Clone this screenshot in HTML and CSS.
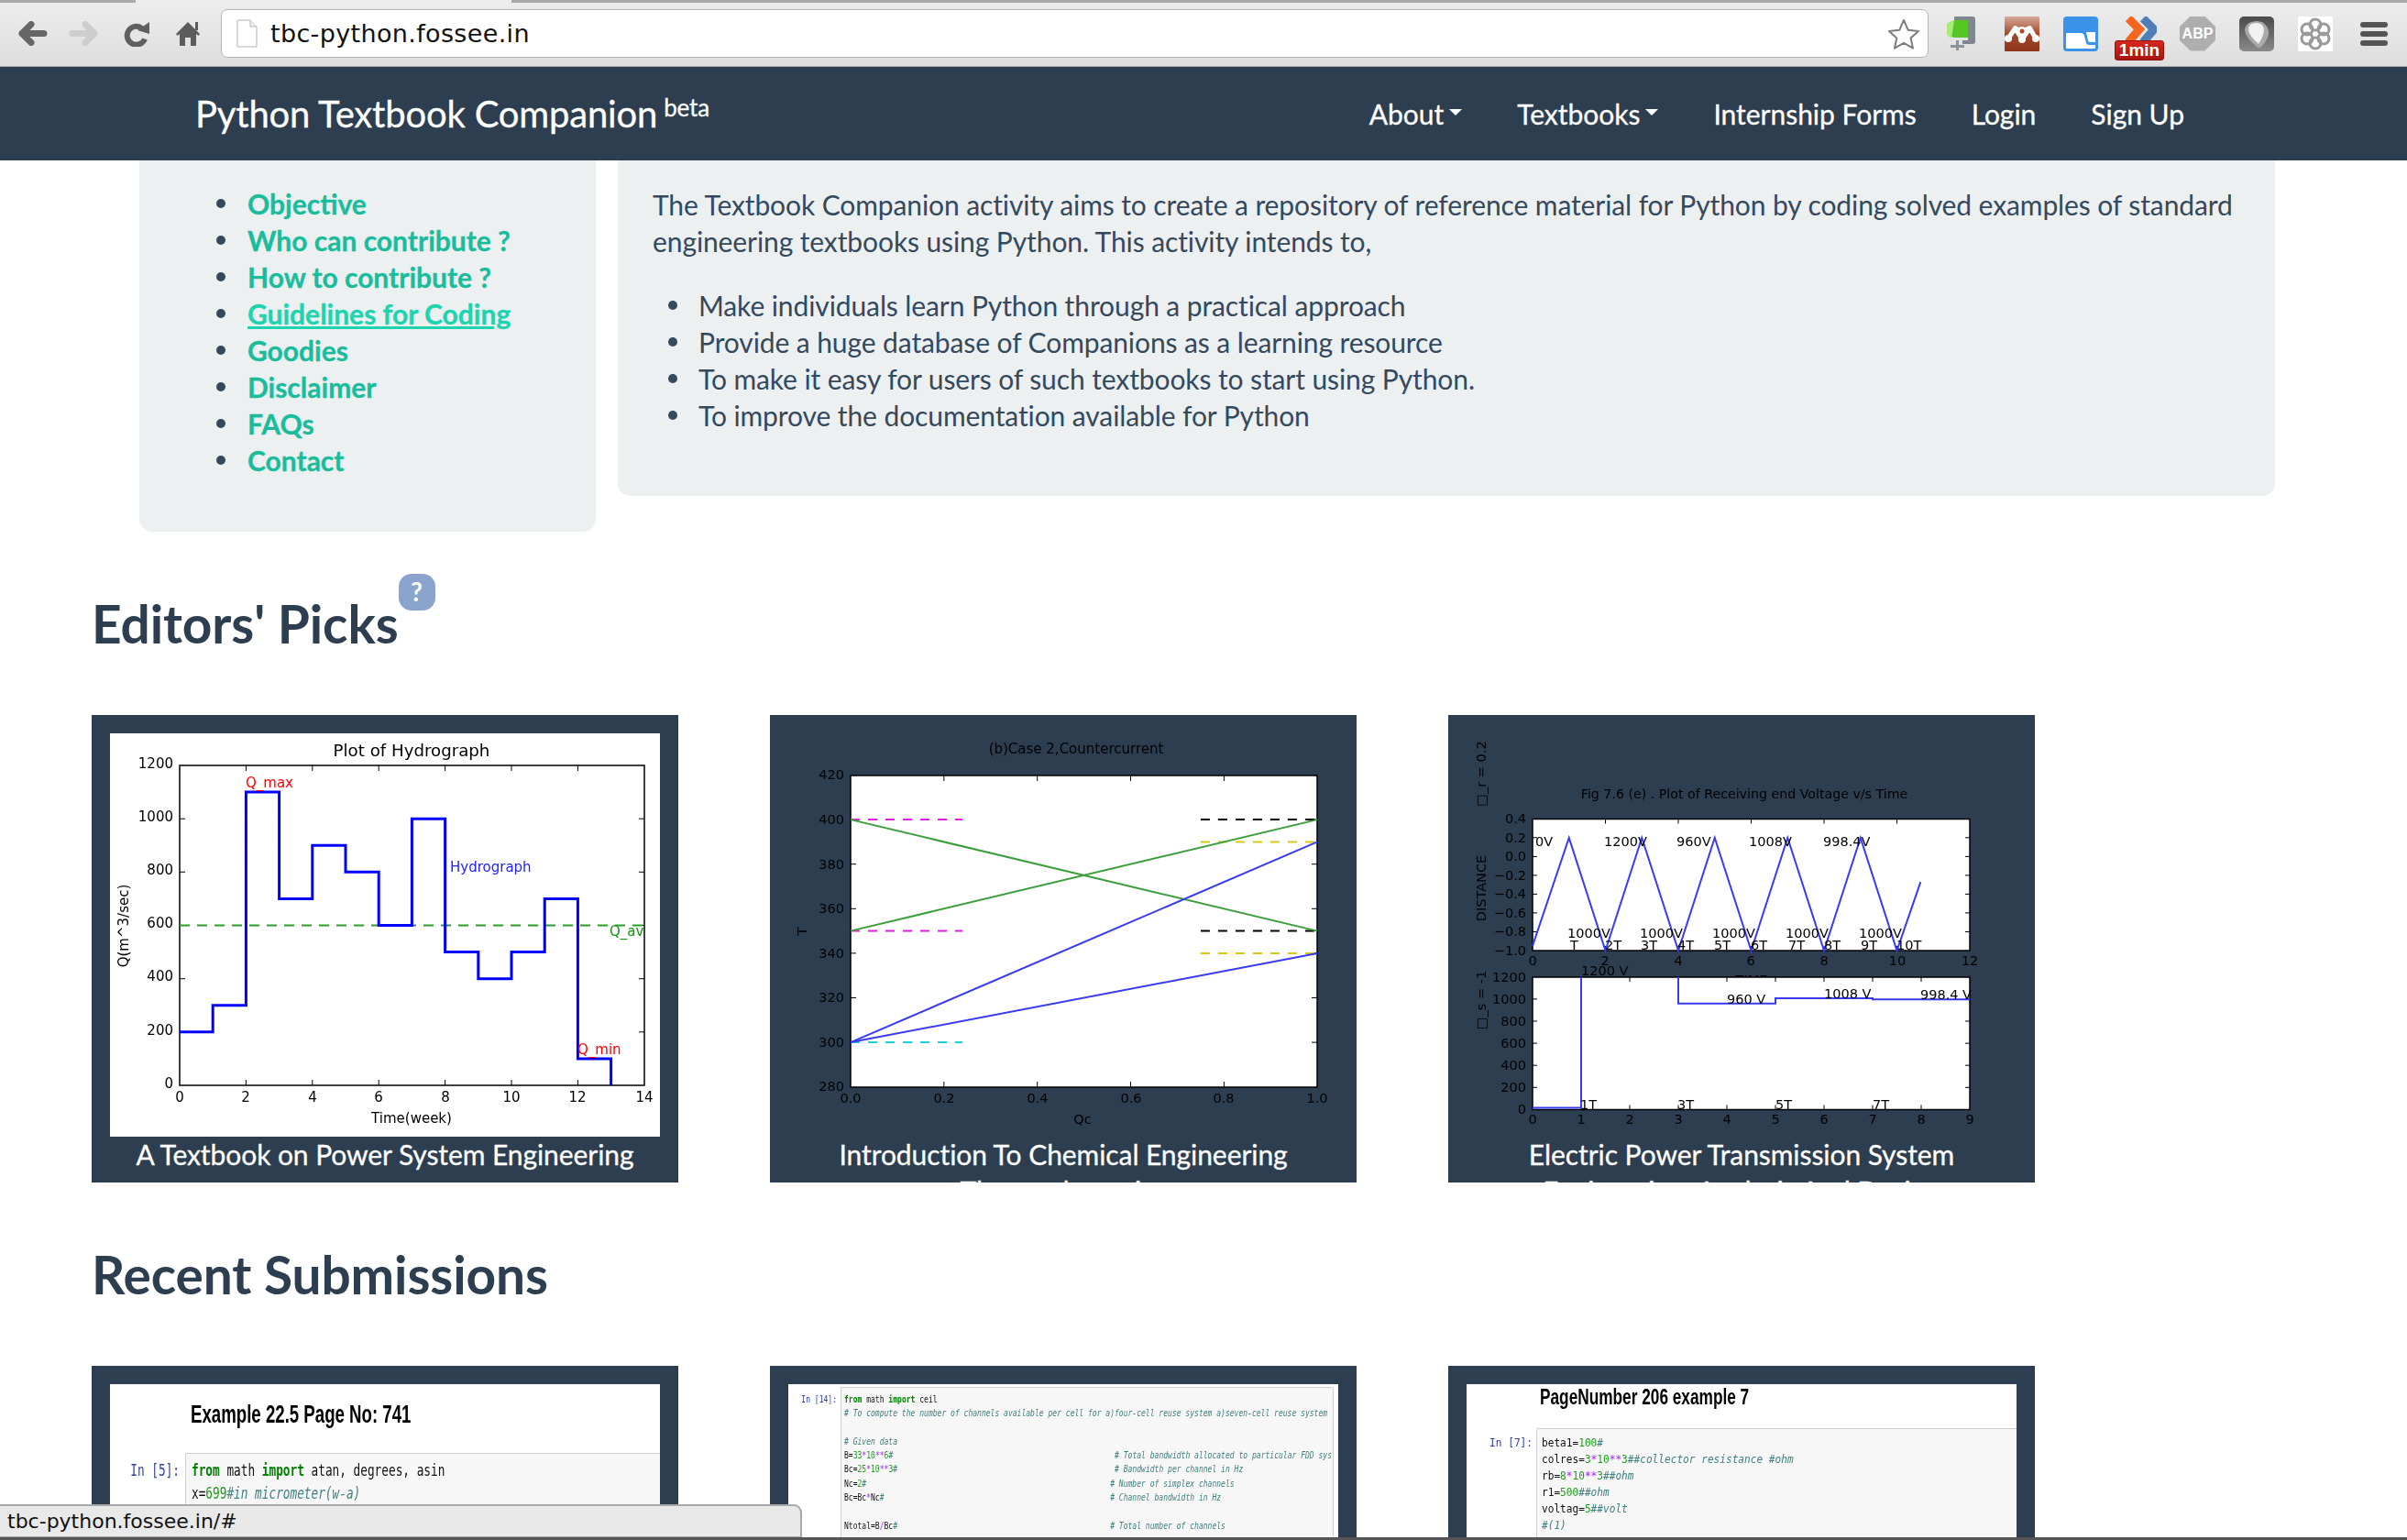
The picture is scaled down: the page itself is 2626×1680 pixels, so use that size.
FILE: index.html
```html
<!DOCTYPE html>
<html lang="en">
<head>
<meta charset="utf-8">
<title>Python Textbook Companion</title>
<link rel="stylesheet" href="styles.css">
</head>
<body>
<header class="browser">
  <div class="tabstrip"><span class="tab-edge tab-left"></span><span class="tab-active"></span><span class="tab-edge tab-right"></span></div>
  <div class="toolbar">
    <svg class="ico ico-back" width="32" height="27" viewBox="0 0 32 27"><path d="M4 13.500H28M14 3.500 4 13.500l10 10" fill="none" stroke="#666" stroke-width="7" stroke-linecap="round" stroke-linejoin="round"/></svg>
    <svg class="ico ico-fwd" width="32" height="27" viewBox="0 0 32 27"><path d="M28 13.500H4M18 3.500l10 10-10 10" fill="none" stroke="#cdcdcd" stroke-width="7" stroke-linecap="round" stroke-linejoin="round"/></svg>
    <svg class="ico ico-reload" width="30" height="28" viewBox="0 0 30 28"><path d="M21 8A10 10 0 1 0 24 19.500" fill="none" stroke="#5f5f5f" stroke-width="6"/><path d="M16 10 29 1v13z" fill="#5f5f5f"/></svg>
    <svg class="ico ico-home" width="28" height="28" viewBox="0 0 28 28"><path d="M14 1 27 14l-1.500 2-2.500-2v13h-6v-9h-6v9H5V14l-2.500 2L1 14z" fill="#5c5c5c"/><path d="M22 1h3v9h-3z" fill="#5c5c5c"/></svg>
    <div class="omnibox">
      <svg class="ico ico-page" width="23" height="31" viewBox="0 0 23 31"><path d="M1 1h14l7 7v22H1z" fill="#fff" stroke="#b5b5b5"/><path d="M15 1v7h7" fill="#eee" stroke="#b5b5b5"/></svg>
      <span class="url">tbc-python.fossee.in</span>
      <svg class="ico ico-star" width="36" height="34" viewBox="0 0 36 34"><path d="M18 2l4.800 10.800 11.200 1.200-8.400 7.500 2.400 11.200L18 26.800 7.900 32.700l2.400-11.200L2 14l11.200-1.200z" fill="#fff" stroke="#7d7d7d" stroke-width="2" stroke-linejoin="round"/></svg>
    </div>
    <div class="extensions">
      <svg class="ext ext-clamp" width="31" height="38" viewBox="0 0 31 38"><path d="M8 0h20q3 0 3 3v24q0 3-3 3H17v-4h6V5H8z" fill="#7f8790"/><path d="M0 8 8 4h15v19H8l-8-3z" fill="#57c523"/><path d="M0 8l8-4-3 20-5-4z" fill="#a9ea7a"/><path d="M10 26h3v11h-3zM4 31h15v3H4z" fill="#8d959c"/></svg>
      <svg class="ext ext-mend" width="38" height="38" viewBox="0 0 38 38"><defs><linearGradient id="md" x1="0" y1="0" x2="0" y2="1"><stop offset="0" stop-color="#d6ab9a"/><stop offset=".5" stop-color="#a5482c"/><stop offset="1" stop-color="#8c351b"/></linearGradient></defs><rect width="38" height="38" rx="1" fill="url(#md)"/><path d="M4 24 11.500 12.700 19 25l8.500-12.300L34 24M11.500 12.700 19 16l8.500-3.300" fill="none" stroke="#fff" stroke-width="5" stroke-linejoin="round" stroke-linecap="round"/><circle cx="4" cy="24" r="4" fill="#fff"/><circle cx="34" cy="24" r="4" fill="#fff"/><circle cx="19" cy="25" r="4" fill="#fff"/><circle cx="19" cy="16" r="5" fill="#fff"/><circle cx="19" cy="16" r="2.500" fill="#b5492c"/></svg>
      <svg class="ext ext-blue" width="38" height="38" viewBox="0 0 38 38"><rect width="38" height="38" rx="4" fill="#3a93e8"/><path d="M3 18h16q3 0 4 3l2 8q1 2 3 2h7v3q0 1-1 1H4q-1 0-1-1z" fill="#fff"/><path d="M25 17h10v11h-6q-2 0-2-2z" fill="#fff"/></svg>
      <div class="ext-wrap">
        <svg class="ext-chev" width="36" height="30" viewBox="0 0 36 30"><path d="M21 2l12 12-12 14" fill="none" stroke="#4f7db5" stroke-width="9"/><path d="M5 2l12 12L5 28" fill="none" stroke="#f4661b" stroke-width="9"/></svg>
        <span class="badge-min">1min</span>
      </div>
      <div class="ext-abp">ABP</div>
      <svg class="ext ext-pick" width="38" height="38" viewBox="0 0 38 38"><defs><linearGradient id="pk" x1="0" y1="0" x2="0" y2="1"><stop offset="0" stop-color="#4a4a4a"/><stop offset="1" stop-color="#8a8a8a"/></linearGradient></defs><rect width="38" height="38" rx="5" fill="url(#pk)"/><path d="M20 5q10 1 12 11 1 8-8 17-3 2-5 0Q7 23 6 15 7 5 20 5z" fill="#a9a9a9"/><path d="M18 7q8 0 9 7 0 7-6 16Q11 21 10 15q0-8 8-8z" fill="#f1f1f1"/></svg>
      <svg class="ext ext-flower" width="38" height="38" viewBox="0 0 38 38"><rect width="38" height="38" fill="#fff"/><g fill="none" stroke="#9a9a9a" stroke-width="3"><circle cx="19" cy="9" r="6"/><circle cx="28" cy="14" r="6"/><circle cx="28" cy="24" r="6"/><circle cx="19" cy="29" r="6"/><circle cx="10" cy="24" r="6"/><circle cx="10" cy="14" r="6"/></g></svg>
    </div>
    <div class="menu-btn"><i></i><i></i><i></i></div>
  </div>
</header>

<nav class="navbar">
  <a class="brand">Python Textbook Companion <sup class="brand-sup">beta</sup></a>
  <ul class="nav-links">
    <li>About<span class="caret"></span></li>
    <li>Textbooks<span class="caret"></span></li>
    <li>Internship Forms</li>
    <li>Login</li>
    <li>Sign Up</li>
  </ul>
</nav>

<main class="content">
  <section class="hero">
    <aside class="panel side-panel">
      <ul class="side-list">
        <li><a>Objective</a></li>
        <li><a>Who can contribute ?</a></li>
        <li><a>How to contribute ?</a></li>
        <li><a class="is-hover">Guidelines for Coding</a></li>
        <li><a>Goodies</a></li>
        <li><a>Disclaimer</a></li>
        <li><a>FAQs</a></li>
        <li><a>Contact</a></li>
      </ul>
    </aside>
    <div class="panel intro-panel">
      <p class="intro-text">The Textbook Companion activity aims to create a repository of reference material for Python by coding solved examples of standard engineering textbooks using Python. This activity intends to,</p>
      <ul class="intro-list">
        <li>Make individuals learn Python through a practical approach</li>
        <li>Provide a huge database of Companions as a learning resource</li>
        <li>To make it easy for users of such textbooks to start using Python.</li>
        <li>To improve the documentation available for Python</li>
      </ul>
    </div>
  </section>

  <h2 class="section-title"><span class="title-wrap">Editors' Picks<span class="help-badge">?</span></span></h2>
  <div class="cards">
    <article class="card">
      <div class="card-img img-white">
        <svg class="chart chart-a" width="600" height="440" viewBox="0 0 600 440">
          <text x="329" y="25" class="t-mid t-title">Plot of Hydrograph</text>
          <rect x="76" y="35" width="507" height="349" fill="#fff" stroke="#000" stroke-width="1.5"/>
          <path d="M148.400 384v-6M220.800 384v-6M293.200 384v-6M365.600 384v-6M438 384v-6M510.400 384v-6M148.400 35v6M220.800 35v6M293.200 35v6M365.600 35v6M438 35v6M510.400 35v6M76 325.800h6M76 267.700h6M76 209.500h6M76 151.300h6M76 93.200h6M583 325.800h-6M583 267.700h-6M583 209.500h-6M583 151.300h-6M583 93.200h-6" stroke="#000" fill="none"/>
          <g transform="translate(76,384) scale(36.2,-0.2908)">
            <polyline class="nss" points="0,600 14,600" fill="none" stroke="#2a9d2a" stroke-width="2" stroke-dasharray="11 8"/>
            <polyline class="nss" points="0,200 1,200 1,300 2,300 2,1100 3,1100 3,700 4,700 4,900 5,900 5,800 6,800 6,600 7,600 7,1000 8,1000 8,500 9,500 9,400 10,400 10,500 11,500 11,700 12,700 12,100 13,100 13,0" fill="none" stroke="#0000ff" stroke-width="3"/>
          </g>
          <text x="148" y="59" fill="#ff0000">Q_max</text>
          <text x="371" y="151" fill="#2222ff">Hydrograph</text>
          <text x="545" y="221" fill="#129512">Q_av</text>
          <text x="510" y="350" fill="#ff0000">Q_min</text>
          <g class="t-end">
            <text x="69" y="38">1200</text><text x="69" y="96">1000</text><text x="69" y="154">800</text><text x="69" y="212">600</text><text x="69" y="270">400</text><text x="69" y="329">200</text><text x="69" y="387">0</text>
          </g>
          <g class="t-mid">
            <text x="76" y="402">0</text><text x="148" y="402">2</text><text x="221" y="402">4</text><text x="293" y="402">6</text><text x="366" y="402">8</text><text x="438" y="402">10</text><text x="510" y="402">12</text><text x="583" y="402">14</text>
            <text x="329" y="425">Time(week)</text>
            <text transform="translate(20,210) rotate(-90)">Q(m^3/sec)</text>
          </g>
        </svg>
      </div>
      <h3 class="card-title">A Textbook on Power System Engineering</h3>
    </article>

    <article class="card">
      <div class="card-img">
        <svg class="chart" width="600" height="440" viewBox="0 0 600 440">
          <text x="314" y="22" class="t-mid t-wide">(b)Case 2,Countercurrent</text>
          <rect x="68" y="46" width="509" height="340" fill="#fff" stroke="#000" stroke-width="1.5"/>
          <path d="M169.800 386v-6M271.700 386v-6M373.500 386v-6M475.400 386v-6M169.800 46v6M271.700 46v6M373.500 46v6M475.400 46v6M68 337.100h6M68 288.500h6M68 239.900h6M68 191.300h6M68 142.700h6M68 94.100h6M577 337.100h-6M577 288.500h-6M577 239.900h-6M577 191.300h-6M577 142.700h-6M577 94.100h-6" stroke="#000" fill="none"/>
          <g transform="translate(68,385.700) scale(509.200,-2.430)" fill="none">
            <g stroke-width="2" stroke-dasharray="10 9">
              <polyline class="nss" points="0,120 .24,120" stroke="#e020d8"/>
              <polyline class="nss" points="0,70 .24,70" stroke="#e020d8"/>
              <polyline class="nss" points="0,20 .24,20" stroke="#18d0d8"/>
              <polyline class="nss" points=".75,120 1,120" stroke="#000"/>
              <polyline class="nss" points=".75,70 1,70" stroke="#000"/>
              <polyline class="nss" points=".75,110 1,110" stroke="#d8c818"/>
              <polyline class="nss" points=".75,60 1,60" stroke="#d8c818"/>
            </g>
            <g stroke-width="2">
              <polyline class="nss" points="0,120 1,70" stroke="#3a9e3a"/>
              <polyline class="nss" points="0,70 1,120" stroke="#3a9e3a"/>
              <polyline class="nss" points="0,20 1,110" stroke="#3a3af5"/>
              <polyline class="nss" points="0,20 1,60" stroke="#3a3af5"/>
            </g>
          </g>
          <g class="t-end">
            <text x="61" y="50">420</text><text x="61" y="99">400</text><text x="61" y="148">380</text><text x="61" y="196">360</text><text x="61" y="245">340</text><text x="61" y="293">320</text><text x="61" y="342">300</text><text x="61" y="390">280</text>
          </g>
          <g class="t-mid">
            <text x="68" y="403">0.0</text><text x="170" y="403">0.2</text><text x="272" y="403">0.4</text><text x="374" y="403">0.6</text><text x="475" y="403">0.8</text><text x="577" y="403">1.0</text>
            <text x="321" y="426">Qc</text>
            <text transform="translate(20,216) rotate(-90)">T</text>
          </g>
        </svg>
      </div>
      <h3 class="card-title">Introduction To Chemical Engineering Thermodynamics</h3>
    </article>

    <article class="card">
      <div class="card-img">
        <svg class="chart" width="600" height="440" viewBox="0 0 600 440">
          <text x="303" y="71" class="t-mid t-small">Fig 7.6 (e) . Plot of Receiving end Voltage v/s Time</text>
          <text x="311" y="274" class="t-mid">TIME</text>
          <rect x="72" y="93.500" width="477" height="143.500" fill="#fff" stroke="#000" stroke-width="1.5"/>
          <path d="M151.500 237v-5M231 237v-5M310.500 237v-5M390 237v-5M469.500 237v-5M151.500 93.500v5M231 93.500v5M310.500 93.500v5M390 93.500v5M469.500 93.500v5M72 216.500h5M72 195.900h5M72 175.400h5M72 154.900h5M72 134.400h5M72 113.800h5M549 216.500h-5M549 195.900h-5M549 175.400h-5M549 154.900h-5M549 134.400h-5M549 113.800h-5" stroke="#000" fill="none"/>
          <g transform="translate(72,237) scale(39.750,-102.600)">
            <polyline class="nss" points="0,.05 1,1.200 2,0 3,1.200 4,0 5,1.200 6,0 7,1.200 8,0 9,1.200 10,0 10.650,.73" fill="none" stroke="#3a3af5" stroke-width="2"/>
          </g>
          <text x="75" y="123">0V</text><text x="150" y="123">1200V</text><text x="229" y="123">960V</text><text x="308" y="123">1008V</text><text x="389" y="123">998.4V</text>
          <text x="110" y="223">1000V</text><text x="189" y="223">1000V</text><text x="268" y="223">1000V</text><text x="348" y="223">1000V</text><text x="428" y="223">1000V</text>
          <text x="113" y="236">T</text><text x="151" y="236">2T</text><text x="190" y="236">3T</text><text x="230" y="236">4T</text><text x="270" y="236">5T</text><text x="310" y="236">6T</text><text x="351" y="236">7T</text><text x="390" y="236">8T</text><text x="430" y="236">9T</text><text x="469" y="236">10T</text>
          <text x="125" y="264">1200 V</text>
          <rect x="72" y="266" width="477" height="144.500" fill="#fff" stroke="#000" stroke-width="1.5"/>
          <path d="M125 410.500v-5M178 410.500v-5M231 410.500v-5M284 410.500v-5M337 410.500v-5M390 410.500v-5M443 410.500v-5M496 410.500v-5M125 266v5M178 266v5M231 266v5M284 266v5M337 266v5M390 266v5M443 266v5M496 266v5M72 386.300h5M72 362.200h5M72 338.100h5M72 314h5M72 289.900h5M549 386.300h-5M549 362.200h-5M549 338.100h-5M549 314h-5M549 289.900h-5" stroke="#000" fill="none"/>
          <g transform="translate(72,410.400) scale(53,-0.1205)" fill="none" stroke="#3a3af5" stroke-width="2">
            <polyline class="nss" points="0,15 1,15 1,1200"/>
            <polyline class="nss" points="3,1200 3,960 5,960 5,1008 7,1008 7,998 9,998"/>
          </g>
          <text x="284" y="295">960 V</text><text x="390" y="289">1008 V</text><text x="495" y="290">998.4 V</text>
          <text x="124" y="410">1T</text><text x="230" y="410">3T</text><text x="337" y="410">5T</text><text x="443" y="410">7T</text>
          <g class="t-end">
            <text x="65" y="98">0.4</text><text x="65" y="119">0.2</text><text x="65" y="139">0.0</text><text x="65" y="160">−0.2</text><text x="65" y="180">−0.4</text><text x="65" y="201">−0.6</text><text x="65" y="221">−0.8</text><text x="65" y="242">−1.0</text>
            <text x="65" y="271">1200</text><text x="65" y="295">1000</text><text x="65" y="319">800</text><text x="65" y="343">600</text><text x="65" y="367">400</text><text x="65" y="391">200</text><text x="65" y="415">0</text>
          </g>
          <g class="t-mid">
            <text x="72" y="253">0</text><text x="151" y="253">2</text><text x="231" y="253">4</text><text x="310" y="253">6</text><text x="390" y="253">8</text><text x="470" y="253">10</text><text x="549" y="253">12</text>
            <text x="72" y="426">0</text><text x="125" y="426">1</text><text x="178" y="426">2</text><text x="231" y="426">3</text><text x="284" y="426">4</text><text x="337" y="426">5</text><text x="390" y="426">6</text><text x="443" y="426">7</text><text x="496" y="426">8</text><text x="549" y="426">9</text>
            <text transform="translate(21,169) rotate(-90)">DISTANCE</text>
            <text transform="translate(21,44) rotate(-90)">□_r = 0.2</text>
            <text transform="translate(21,291) rotate(-90)">□_s = -1</text>
          </g>
        </svg>
      </div>
      <h3 class="card-title">Electric Power Transmission System Engineering: Analysis And Design</h3>
    </article>
  </div>

  <h2 class="section-title section-title-2">Recent Submissions</h2>
  <div class="cards">
    <article class="card">
      <div class="card-img img-white nb nb-a">
        <div class="nb-head"><span class="squeeze">Example 22.5 Page No: 741</span></div>
        <div class="nb-row">
          <span class="prompt"><span class="squeeze-r">In [5]:</span></span>
          <div class="codebox"><pre class="code squeeze"><span class="kw">from</span> math <span class="kw">import</span> atan, degrees, asin
x=<span class="num">699</span><span class="cm">#in micrometer(w-a)</span></pre></div>
        </div>
      </div>
    </article>
    <article class="card">
      <div class="card-img img-white nb nb-b">
        <div class="nb-row">
          <span class="prompt"><span class="squeeze-r">In [14]:</span></span>
          <div class="codebox"><pre class="code squeeze"><span class="kw">from</span> math <span class="kw">import</span> ceil
<span class="cm"># To compute the number of channels available per cell for a)four-cell reuse system a)seven-cell reuse system</span>

<span class="cm"># Given data</span>
B=<span class="num">33</span><span class="op">*</span><span class="num">10</span><span class="op">**</span><span class="num">6</span><span class="cm">#                                                  # Total bandwidth allocated to particular FDD sys</span>
Bc=<span class="num">25</span><span class="op">*</span><span class="num">10</span><span class="op">**</span><span class="num">3</span><span class="cm">#                                                 # Bandwidth per channel in Hz</span>
Nc=<span class="num">2</span><span class="cm">#                                                       # Number of simplex channels</span>
Bc=Bc<span class="op">*</span>Nc<span class="cm">#                                                   # Channel bandwidth in Hz</span>

Ntotal=B<span class="op">/</span>Bc<span class="cm">#                                                # Total number of channels</span></pre></div>
        </div>
      </div>
    </article>
    <article class="card">
      <div class="card-img img-white nb nb-c">
        <div class="nb-head"><span class="squeeze">PageNumber 206 example 7</span></div>
        <div class="nb-row">
          <span class="prompt"><span class="squeeze-r">In [7]:</span></span>
          <div class="codebox"><pre class="code squeeze">beta1=<span class="num">100</span><span class="cm">#</span>
colres=<span class="num">3</span><span class="op">*</span><span class="num">10</span><span class="op">**</span><span class="num">3</span><span class="cm">##collector resistance #ohm</span>
rb=<span class="num">8</span><span class="op">*</span><span class="num">10</span><span class="op">**</span><span class="num">3</span><span class="cm">##ohm</span>
r1=<span class="num">500</span><span class="cm">##ohm</span>
voltag=<span class="num">5</span><span class="cm">##volt</span>
<span class="cm">#(1)</span></pre></div>
        </div>
      </div>
    </article>
  </div>
</main>

<div class="status-bubble">tbc-python.fossee.in/#</div>
<div class="window-edge"></div>
</body>
</html>
```

FILE: styles.css
```css
* { box-sizing: border-box; }
html, body { margin: 0; height: 100%; overflow: hidden; background: #fff; }
body { font-family: "Lato", "Open Sans", sans-serif; color: #34495e; position: relative; height: 1680px; }

/* browser chrome */
.browser { height: 73px; background: linear-gradient(#ededed, #dedede); border-bottom: 1px solid #a8a8a8; }
.tabstrip { display: flex; height: 3px; }
.tab-edge { background: #a9a9a9; }
.tab-left { width: 148px; }
.tab-active { width: 410px; background: #ededed; }
.tab-right { flex: 1; }
.toolbar { display: flex; align-items: center; height: 69px; padding-left: 20px; padding-bottom: 2px; }
.ico { display: block; flex: none; }
.ico-fwd { margin-left: 23px; }
.ico-reload { margin-left: 27px; }
.ico-home { margin-left: 27px; }
.omnibox { display: flex; align-items: center; width: 1863px; height: 53px; margin-left: 22px; padding: 0 8px 0 16px; background: #fff; border: 1px solid #b4b4b4; border-radius: 7px; }
.url { margin-left: 14px; font-family: "DejaVu Sans", sans-serif; font-size: 27px; letter-spacing: .35px; color: #111; }
.ico-star { margin-left: auto; }
.extensions { display: flex; align-items: flex-start; height: 48px; margin-top: 10px; margin-left: 20px; }
.ext { display: block; flex: none; }
.ext-mend { margin-left: 32px; }
.ext-blue { margin-left: 26px; }
.ext-wrap { position: relative; width: 54px; height: 48px; margin-left: 18px; }
.ext-chev { display: block; position: absolute; left: 10px; top: 0; }
.badge-min { position: absolute; left: 0; bottom: 0; width: 54px; height: 22px; background: linear-gradient(#d8261f, #a91610); border: 1px solid #8d120d; border-radius: 3px; color: #fff; font: 700 19px/20px "Liberation Sans", sans-serif; text-align: center; }
.ext-abp { width: 39px; height: 38px; margin-left: 17px; background: #aeaeae; clip-path: polygon(30% 0, 70% 0, 100% 30%, 100% 70%, 70% 100%, 30% 100%, 0 70%, 0 30%); color: #fff; font: 700 16px/38px "Liberation Sans", sans-serif; text-align: center; }
.ext-pick { margin-left: 26px; }
.ext-flower { margin-left: 26px; }
.menu-btn { display: flex; flex-direction: column; gap: 4px; width: 30px; margin-left: 30px; }
.menu-btn i { display: block; height: 6px; background: #555; border-radius: 3px; }

/* navbar */
.navbar { display: flex; align-items: center; height: 102px; padding: 0 0 1px 213px; background: #2c3e50; color: #fff; }
.brand { font-size: 40px; letter-spacing: -.18px; white-space: nowrap; -webkit-text-stroke: .3px #fff; }
.brand-sup { margin-left: -3px; font-size: 26px; line-height: 0; vertical-align: 12px; }
.nav-links { display: flex; gap: 60px; margin: 0 0 0 auto; padding: 0 243px 0 0; list-style: none; font-size: 30px; letter-spacing: -.02px; -webkit-text-stroke: .3px #fff; }
.nav-links li { display: flex; align-items: center; white-space: nowrap; }
.caret { width: 0; height: 0; margin-left: 6px; margin-top: -2px; border: 7px solid transparent; border-top-color: #fff; border-bottom-width: 0; }

/* hero */
.hero { display: flex; align-items: flex-start; gap: 24px; margin-left: 152px; }
.panel { background: #ecf0f1; border-radius: 0 0 14px 14px; }
.side-panel { width: 498px; height: 405px; padding: 27px 0 0; }
.side-list { margin: 0; padding: 0 0 0 118px; font-size: 30px; line-height: 40px; font-weight: 700; list-style: none; }
.side-list li { position: relative; }
.side-list li::before { content: ""; position: absolute; left: -34px; top: 15px; width: 10px; height: 10px; border-radius: 50%; background: #34495e; }
.side-list a { color: #1abc9c; -webkit-text-stroke: .3px #1abc9c; }
.side-list a.is-hover { color: #1dd4ae; -webkit-text-stroke: .3px #1dd4ae; text-decoration: underline; }
.intro-panel { width: 1808px; height: 366px; padding: 28px 30px 0 38px; font-size: 30px; line-height: 40px; }
.intro-text { margin: 0; letter-spacing: -.1px; }
.intro-list { margin: 30px 0 0; padding: 0 0 0 50px; letter-spacing: -.1px; list-style: none; }
.intro-list li { position: relative; }
.intro-list li::before { content: ""; position: absolute; left: -33px; top: 15px; width: 10px; height: 10px; border-radius: 50%; background: #34495e; }

/* sections */
.section-title { height: 80px; margin: 60px 0 60px 100px; font-size: 56.800px; line-height: 80px; font-weight: 700; color: #2c3e50; letter-spacing: -.1px; }
.section-title-2 { margin-top: 60px; }
.title-wrap { position: relative; display: inline-block; }
.help-badge { position: absolute; left: 100%; top: -14px; width: 40px; height: 40px; border-radius: 14px; background: #8aa4cd; color: #fff; font-size: 28px; line-height: 38px; text-align: center; letter-spacing: 0; }

/* cards */
.content { height: 1505px; overflow: hidden; }
.cards { display: flex; gap: 100px; margin-left: 100px; }
.card { flex: none; width: 640px; height: 510px; padding: 20px 20px 0; background: #2c3e50; overflow: hidden; }
.card-img { width: 600px; height: 440px; overflow: hidden; }
.img-white { background: #fff; }
.card-title { margin: -1px -10px 0; font-size: 30px; line-height: 40px; font-weight: 400; color: #fff; text-align: center; letter-spacing: -.07px; -webkit-text-stroke: .3px #fff; }

/* charts */
.chart { display: block; filter: blur(.45px); }
.chart text { font-family: "DejaVu Sans", sans-serif; font-size: 14.500px; fill: #000; }
.chart-a text { font-size: 15px; }
.chart text[fill="#ff0000"] { fill: #ff0000; }
.chart text[fill="#2222ff"] { fill: #2222ff; }
.chart text[fill="#129512"] { fill: #129512; }
.chart .t-title { font-size: 18.200px; }
.chart .t-wide { font-size: 15px; }
.chart .t-small { font-size: 14.200px; }
.t-mid text, text.t-mid { text-anchor: middle; }
.t-end text { text-anchor: end; }
.nss { vector-effect: non-scaling-stroke; }

/* notebooks: the screenshots are squeezed horizontally */
.nb { filter: blur(.35px); }
.nb-head { font-family: "Liberation Sans", sans-serif; font-weight: 700; color: #000; white-space: nowrap; }
.squeeze { display: block; transform-origin: left center; }
.squeeze-r { display: block; transform-origin: right center; }
.nb-row { display: flex; align-items: flex-start; }
.prompt { flex: none; font-family: "DejaVu Sans Mono", monospace; color: #303f9f; text-align: right; white-space: nowrap; }
.codebox { flex: 1; min-width: 0; background: #f7f7f7; border: 1px solid #cfcfcf; border-radius: 2px; overflow: hidden; }
.code { margin: 0; font-family: "DejaVu Sans Mono", monospace; color: #111; }
.kw { color: #008000; font-weight: 700; }
.num { color: #1c9c1c; }
.op { color: #aa22ff; }
.cm { color: #408080; font-style: italic; }

.nb-a .nb-head { padding: 17px 0 0 88px; font-size: 28px; line-height: 32px; }
.nb-a .nb-head .squeeze { transform: scaleX(.666); }
.nb-a .nb-row { margin-top: 26px; margin-right: -10px; }
.nb-a .prompt { width: 82px; padding-right: 6px; padding-top: 7px; font-size: 17px; line-height: 25px; }
.nb-a .squeeze-r, .nb-a .code { transform: scaleX(.75); }
.nb-a .codebox { padding: 6px 0 0 6px; height: 120px; }
.nb-a .code { font-size: 17px; line-height: 25px; }

.nb-b .nb-row { padding-top: 3px; margin-right: 5px; }
.nb-b .prompt { width: 57px; padding-right: 4px; padding-top: 6px; font-size: 10.500px; line-height: 15.300px; }
.nb-b .squeeze-r, .nb-b .code { transform: scaleX(.765); }
.nb-b .codebox { padding: 5px 0 0 3px; height: 200px; }
.nb-b .code { font-size: 10.500px; line-height: 15.300px; }

.nb-c .nb-head { padding: 0 0 0 80px; font-size: 23px; line-height: 28px; }
.nb-c .nb-head .squeeze { transform: scaleX(.75); }
.nb-c .nb-row { margin-top: 20px; margin-right: -10px; }
.nb-c .prompt { width: 76px; padding-right: 4px; padding-top: 7px; font-size: 12.500px; line-height: 18px; }
.nb-c .squeeze-r, .nb-c .code { transform: scaleX(.89); }
.nb-c .codebox { padding: 6px 0 0 5px; height: 140px; }
.nb-c .code { font-size: 12.500px; line-height: 18px; }

/* status bubble and window edge */
.status-bubble { position: absolute; left: 0; bottom: 2px; width: 875px; height: 37px; padding: 0 0 0 8px; background: #e9e9e9; border: 2px solid #a8a8a8; border-left: 0; border-radius: 0 9px 0 0; font-family: "DejaVu Sans", sans-serif; font-size: 22px; line-height: 33px; color: #111; }
.window-edge { position: absolute; left: 0; right: 0; bottom: 0; height: 3px; background: #555; }
```
